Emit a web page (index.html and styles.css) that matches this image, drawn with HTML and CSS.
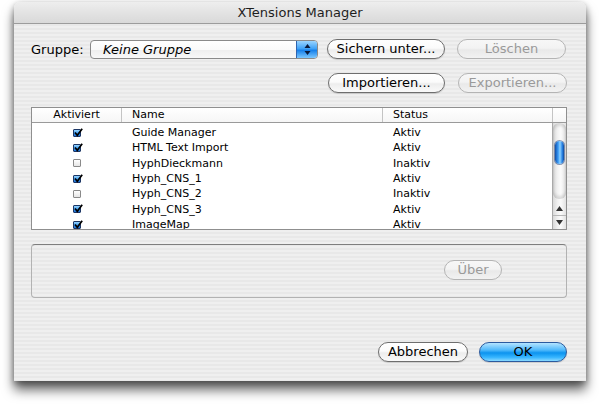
FILE: index.html
```html
<!DOCTYPE html>
<html lang="de">
<head>
<meta charset="utf-8">
<title>XTensions Manager</title>
<link rel="stylesheet" href="styles.css">
</head>
<body>
<div class="win">
  <div class="titlebar">XTensions Manager</div>
  <div class="content">
    <div class="row1">
      <span class="lbl">Gruppe:</span>
      <div class="popup">
        <span class="popup-text">Keine Gruppe</span>
        <span class="popup-arrows">
          <svg width="9" height="13" viewBox="0 0 9 13"><path d="M4.5 1 L7.5 5 L1.5 5 Z" fill="#0a1a3a"/><path d="M4.5 12 L7.5 8 L1.5 8 Z" fill="#0a1a3a"/></svg>
        </span>
      </div>
      <button class="btn w-sichern">Sichern unter...</button>
      <button class="btn dis w-loeschen">Löschen</button>
    </div>
    <div class="row2">
      <button class="btn w-import">Importieren...</button>
      <button class="btn dis w-export">Exportieren...</button>
    </div>

    <div class="table">
      <div class="thead">
        <div class="th c1 center">Aktiviert</div>
        <div class="th c2">Name</div>
        <div class="th c3">Status</div>
        <div class="th c4"></div>
      </div>
      <div class="tbody">
        <div class="list">
          <div class="rows">
            <div class="tr"><span class="td c1"><span class="cb on"><svg viewBox="0 0 10 10"><path d="M2 4.5 L4.3 7.3 L9.2 0.8" /></svg></span></span><span class="td c2">Guide Manager</span><span class="td c3">Aktiv</span></div>
            <div class="tr"><span class="td c1"><span class="cb on"><svg viewBox="0 0 10 10"><path d="M2 4.5 L4.3 7.3 L9.2 0.8" /></svg></span></span><span class="td c2">HTML Text Import</span><span class="td c3">Aktiv</span></div>
            <div class="tr"><span class="td c1"><span class="cb"></span></span><span class="td c2">HyphDieckmann</span><span class="td c3">Inaktiv</span></div>
            <div class="tr"><span class="td c1"><span class="cb on"><svg viewBox="0 0 10 10"><path d="M2 4.5 L4.3 7.3 L9.2 0.8" /></svg></span></span><span class="td c2">Hyph_CNS_1</span><span class="td c3">Aktiv</span></div>
            <div class="tr"><span class="td c1"><span class="cb"></span></span><span class="td c2">Hyph_CNS_2</span><span class="td c3">Inaktiv</span></div>
            <div class="tr"><span class="td c1"><span class="cb on"><svg viewBox="0 0 10 10"><path d="M2 4.5 L4.3 7.3 L9.2 0.8" /></svg></span></span><span class="td c2">Hyph_CNS_3</span><span class="td c3">Aktiv</span></div>
            <div class="tr"><span class="td c1"><span class="cb on"><svg viewBox="0 0 10 10"><path d="M2 4.5 L4.3 7.3 L9.2 0.8" /></svg></span></span><span class="td c2">ImageMap</span><span class="td c3">Aktiv</span></div>
          </div>
        </div>
        <div class="sb">
          <div class="trk"><div class="thumb"></div></div>
          <div class="arr up"><svg width="7" height="5" viewBox="0 0 7 5"><path d="M3.5 0 L7 5 L0 5 Z" fill="#333"/></svg></div>
          <div class="arr down"><svg width="7" height="5" viewBox="0 0 7 5"><path d="M3.5 5 L7 0 L0 0 Z" fill="#333"/></svg></div>
        </div>
      </div>
    </div>

    <div class="groupbox">
      <button class="btn dis w-ueber">Über</button>
    </div>

    <div class="actions">
      <button class="btn w-abbr">Abbrechen</button>
      <button class="btn def w-ok">OK</button>
    </div>
  </div>
</div>
</body>
</html>
```
FILE: styles.css
```css
html, body {
  margin: 0;
  padding: 0;
  background: #ffffff;
}
body {
  font-family: "DejaVu Sans", "Liberation Sans", sans-serif;
  color: #000;
  padding: 2px 0 0 14px;
  height: 404px;
}
.win {
  width: 572px;
  height: 379px;
  border-radius: 6px 6px 0 0;
  background: repeating-linear-gradient(180deg, #efefef 0px, #efefef 2px, #e8e8e8 2px, #e8e8e8 4px);
  box-shadow: 0 9px 12px rgba(0,0,0,0.6), 0 2px 6px rgba(0,0,0,0.35);
  display: flex;
  flex-direction: column;
  overflow: hidden;
}
.titlebar {
  height: 21px;
  line-height: 21px;
  text-align: center;
  font-size: 13px;
  color: #1e1e1e;
  background: linear-gradient(180deg, #eeeeee 0%, #e3e3e3 50%, #d9d9d9 100%);
  border-bottom: 1px solid #9c9c9c;
  flex: none;
}
.content {
  padding: 15px 19px 0 17px;
  display: flex;
  flex-direction: column;
}
.row1 {
  display: flex;
  align-items: center;
  height: 20px;
}
.lbl {
  width: 59px;
  font-size: 13px;
  flex: none;
}
.popup {
  width: 228px;
  height: 19px;
  margin-right: 9px;
  box-sizing: border-box;
  border: 1px solid #8a8a8a;
  border-radius: 4px;
  background: linear-gradient(180deg, #ffffff 0%, #fafafa 50%, #eeeeee 51%, #f8f8f8 100%);
  display: flex;
  align-items: stretch;
  overflow: hidden;
  flex: none;
}
.popup-text {
  flex: 1;
  font-size: 13px;
  font-style: italic;
  line-height: 17px;
  padding-left: 12px;
}
.popup-arrows {
  width: 20px;
  display: flex;
  align-items: center;
  justify-content: center;
  border-left: 1px solid #2f64b0;
  background: linear-gradient(180deg, #9ad4ff 0%, #3fa2f7 45%, #1780ea 55%, #7cc8ff 100%);
}
.btn {
  font-family: "DejaVu Sans", "Liberation Sans", sans-serif;
  font-size: 13px;
  height: 20px;
  box-sizing: border-box;
  padding: 0;
  border: 1px solid #6e6e6e;
  border-radius: 10px;
  color: #000;
  background: linear-gradient(180deg, #ffffff 0%, #fbfbfb 45%, #ededed 55%, #fafafa 100%);
  box-shadow: 0 1px 1px rgba(0,0,0,0.15);
  line-height: 18px;
  text-align: center;
  flex: none;
}
.btn.dis {
  color: #9a9a9a;
  border-color: #b4b4b4;
  background: linear-gradient(180deg, #f7f7f7 0%, #f3f3f3 45%, #e9e9e9 55%, #f2f2f2 100%);
  box-shadow: none;
}
.btn.def {
  border-color: #2b5a9e;
  background: linear-gradient(180deg, #b4e4ff 0%, #4db8fb 40%, #0c93ef 55%, #38b6ff 80%, #8ad9ff 100%);
}
.w-sichern { width: 118px; margin-right: 12px; }
.w-loeschen { width: 109px; }
.row2 {
  display: flex;
  justify-content: flex-end;
  margin-top: 14px;
  height: 20px;
}
.w-import { width: 117px; margin-right: 13px; }
.w-export { width: 109px; }

.table {
  margin-top: 14px;
  height: 123px;
  box-sizing: border-box;
  border: 1px solid #8f8f8f;
  background: #ffffff;
  display: flex;
  flex-direction: column;
}
.thead {
  height: 14px;
  border-bottom: 1px solid #9a9a9a;
  display: grid;
  grid-template-columns: 90px 261px 170px 1fr;
  background: linear-gradient(180deg, #ffffff 0%, #f6f6f6 100%);
  flex: none;
}
.th {
  font-size: 11px;
  line-height: 14px;
  padding-left: 10px;
  border-right: 1px solid #c4c4c4;
}
.th.center { text-align: center; padding-left: 0; }
.th.c4 { border-right: none; padding: 0; }
.tbody {
  flex: 1;
  display: flex;
  overflow: hidden;
}
.list {
  flex: 1;
  overflow: hidden;
}
.rows {
  padding-top: 2px;
}
.tr {
  height: 15.33px;
  display: grid;
  grid-template-columns: 90px 261px 170px;
  align-items: center;
  font-size: 11px;
}
.td.c1 {
  display: flex;
  justify-content: center;
}
.td.c2, .td.c3 {
  padding-left: 10px;
}
.cb {
  width: 8px;
  height: 8px;
  box-sizing: border-box;
  border: 1px solid #8a8a8a;
  border-radius: 1px;
  background: linear-gradient(180deg, #ffffff, #e6e6e6);
  display: block;
  position: relative;
}
.cb.on {
  border-color: #1d3766;
  background: linear-gradient(180deg, #9ad6ff 0%, #3d9cf0 50%, #1a6fd6 100%);
}
.cb svg {
  position: absolute;
  left: -1px;
  top: -2px;
  width: 10px;
  height: 10px;
  overflow: visible;
}
.cb svg path {
  fill: none;
  stroke: #000;
  stroke-width: 1.7;
}
.sb {
  width: 13px;
  border-left: 1px solid #a9a9a9;
  display: flex;
  flex-direction: column;
  background: linear-gradient(90deg, #d9d9d9 0%, #f1f1f1 35%, #fbfbfb 60%, #e2e2e2 100%);
  flex: none;
}
.trk {
  flex: 1;
  padding-top: 18px;
  border-radius: 6px;
  box-shadow: inset 0 3px 3px rgba(0,0,0,0.12), inset 0 -3px 3px rgba(0,0,0,0.12);
  margin-bottom: 3px;
}
.thumb {
  width: 9px;
  height: 23px;
  margin: 0 auto;
  border-radius: 5px;
  background: linear-gradient(90deg, #0e4ea8 0%, #3a9af5 35%, #8fd3ff 55%, #2a84e6 80%, #0d4a9e 100%);
  box-shadow: 0 0 0 1px rgba(20,50,110,0.5);
}
.arr {
  height: 13px;
  display: flex;
  align-items: center;
  justify-content: center;
  flex: none;
}
.arr.down {
  border-top: 1px solid #b8b8b8;
}

.groupbox {
  margin-top: 14px;
  height: 54px;
  box-sizing: border-box;
  border: 1px solid #b2b2b2;
  border-top-color: #7e7e7e;
  border-radius: 4px;
  padding: 15px 64px 0 0;
  display: flex;
  justify-content: flex-end;
  align-items: flex-start;
}
.w-ueber { width: 58px; }

.actions {
  margin-top: 44px;
  display: flex;
  justify-content: flex-end;
}
.w-abbr { width: 90px; margin-right: 11px; }
.w-ok { width: 88px; }
```
